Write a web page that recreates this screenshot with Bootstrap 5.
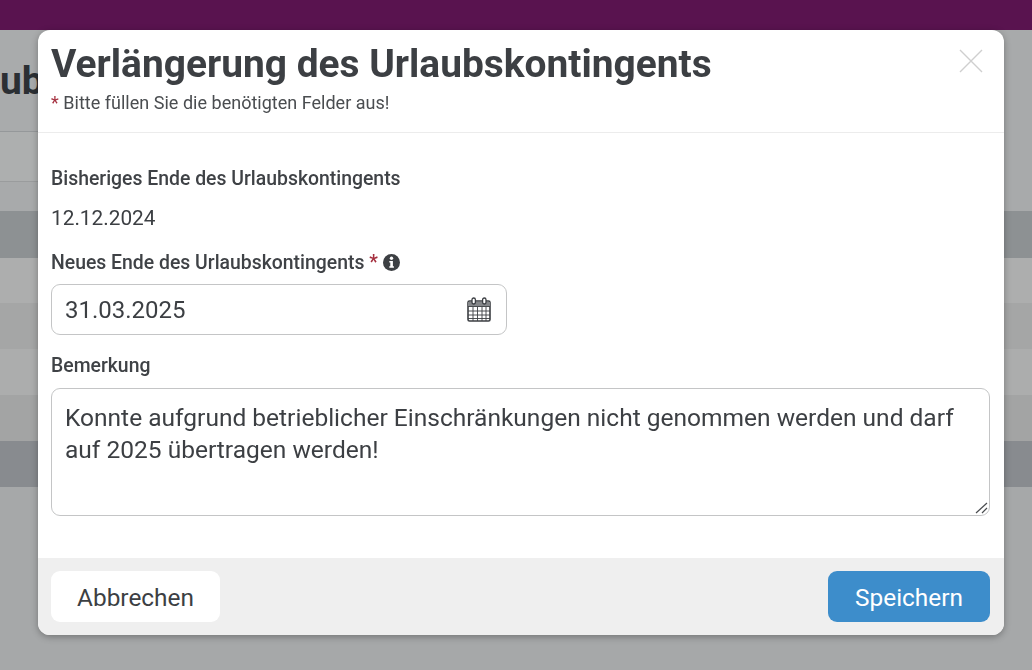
<!DOCTYPE html>
<html lang="de">
<head>
<meta charset="utf-8">
<title>Verlängerung des Urlaubskontingents</title>
<link href="https://cdn.jsdelivr.net/npm/bootstrap@5.3.0/dist/css/bootstrap.min.css" rel="stylesheet">
<style>
html,body{height:100%;overflow:hidden}
body{font-family:Roboto,"Liberation Sans",sans-serif;background:#a7a9aa;color:#3c3f43}
.topbar{height:30px;background:#59134f}
.under{position:relative;height:640px;background:#a8aaab}
.under-head{height:102px;width:50%;background:#a9abac;border-bottom:1px solid #95989a;padding-top:24px}
.under-title{font-size:39px;font-weight:700;line-height:54px;color:#2b2f34;margin:0}
.under-tabs{height:50px;width:50%;background:#adafaf;border-bottom:1px solid #9a9c9d}
.under-sp{height:29px}
.rw{height:46px;background:#a6a8a9}
.rw-a{height:47px;background:#8d9193}
.rw-b{height:45px;background:#adaeae}
.rw-c{background:#a5a6a6}
.rw-d{background:#acadad}
.rw-e{background:#a3a4a4}
.rw-f{background:#888b8f}
.rw-g{height:183px;background:#a6a8a9}
.dlg.modal-dialog{max-width:966px;width:966px;margin:30px 0 0 38px}
.dlg .modal-content{border:0;border-radius:12px;box-shadow:0 2px 7px rgba(0,0,0,.3);overflow:hidden;height:605px;color:#3c3f43}
.dlg .modal-header{display:block;position:relative;height:103px;padding:9px 13px 0;border-bottom:1px solid #ececec}
.dlg-title{font-size:38.900px;font-weight:700;line-height:50px;margin:0;color:#3c3f43}
.dlg-hint{font-size:18px;line-height:24px;margin:2px 0 0;color:#4a4d50;word-spacing:.1px}
.req{color:#a5303f}
.dlg-close{position:absolute;top:19px;right:21px;width:24px;height:24px;padding:0;border:0;background:none;line-height:0}
.dlg .modal-body{padding:33px 14px 0 13px;flex:0 0 auto;height:425px}
.lbl{display:block;font-size:19.400px;font-weight:500;line-height:26px;margin:0;color:#3f4246}
.val{font-size:20.800px;line-height:28px;margin:12px 0 18px;color:#3c3f43}
.dlg .form-control{font-size:24px;line-height:32px;color:#3c3f43;border:1px solid #c4c5c6;border-radius:9px;padding:9px 13px;box-shadow:none}
.date-wrap{position:relative;width:456px;margin:8px 0 18px}
.date-wrap .form-control{height:51px}
.cal{position:absolute;right:16px;top:13px}
.info{vertical-align:-2px}
.note-wrap{position:relative;margin-top:9px}
.dlg textarea.note{height:128px;resize:none;font-size:24.530px;padding:13px 30px 13px 13px}
.grip{position:absolute;right:2px;bottom:2px;pointer-events:none}
.dlg .modal-footer{display:flex;justify-content:space-between;height:77px;flex-wrap:nowrap;padding:13px 14px 13px 13px;margin:0;background:#efefef;border:0;border-radius:0}
.dlg .modal-footer>.btn{margin:0;height:51px;font-size:24.400px;line-height:32px;border-radius:9px;padding:10px 10px 8px;border:0}
.btn-back{width:169px;background:#fff;color:#3c3f43}
.btn-save{width:162px;background:#3d8dcb;color:#fff}
</style>
</head>
<body>
<div class="topbar"></div>
<div class="under">
  <div class="under-head"><h1 class="under-title">ub</h1></div>
  <div class="under-tabs"></div>
  <div class="under-sp"></div>
  <div class="rw-a"></div>
  <div class="rw-b"></div>
  <div class="rw rw-c"></div>
  <div class="rw rw-d"></div>
  <div class="rw rw-e"></div>
  <div class="rw rw-f"></div>
  <div class="rw-g"></div>
</div>
<div class="modal d-block" role="dialog">
  <div class="modal-dialog dlg">
    <div class="modal-content">
      <div class="modal-header">
        <h2 class="dlg-title">Verlängerung des Urlaubskontingents</h2>
        <p class="dlg-hint"><span class="req">*</span> Bitte füllen Sie die benötigten Felder aus!</p>
        <button type="button" class="dlg-close" aria-label="Schließen">
          <svg width="24" height="24" viewBox="0 0 24 24"><path d="M1 1L23 23M23 1L1 23" stroke="#cfcfcf" stroke-width="1.4" fill="none"/></svg>
        </button>
      </div>
      <div class="modal-body">
        <span class="lbl">Bisheriges Ende des Urlaubskontingents</span>
        <p class="val">12.12.2024</p>
        <label class="lbl" for="d1">Neues Ende des Urlaubskontingents <span class="req">*</span>
          <svg class="info" width="17" height="17" viewBox="0 0 17 17"><circle cx="8.5" cy="8.5" r="8.5" fill="#3c3f43"/><circle cx="8.5" cy="4.3" r="1.7" fill="#fff"/><path d="M6.300 7h3.600v5.200h1v1.600H6.300v-1.600h1V8.600h-1z" fill="#fff"/></svg>
        </label>
        <div class="date-wrap">
          <input id="d1" type="text" class="form-control" value="31.03.2025">
          <svg class="cal" width="24" height="25" viewBox="0 0 24 25" fill="none" stroke="#3c3f43"><rect x="1" y="4" width="22" height="20" rx="1.500" stroke-width="1.600"/><path d="M1 5h22v4.500H1z" fill="#85878a" stroke="none"/><path d="M1 9.500h22M1 14h22M1 18h22M1 21.500h22M6 10v14M10.500 10v14M15 10v14M19 10v14" stroke-width=".9"/><rect x="5" y="1" width="3.400" height="6" rx="1.700" fill="#fff" stroke-width="1.300"/><rect x="15.600" y="1" width="3.400" height="6" rx="1.700" fill="#fff" stroke-width="1.300"/></svg>
        </div>
        <label class="lbl" for="n1">Bemerkung</label>
        <div class="note-wrap">
          <textarea id="n1" class="form-control note">Konnte aufgrund betrieblicher Einschränkungen nicht genommen werden und darf auf 2025 übertragen werden!</textarea>
          <svg class="grip" width="13" height="12" viewBox="0 0 13 12" aria-hidden="true"><path d="M1 11L12 1M7 11L12 6" stroke="#4a4d50" stroke-width="1.200" fill="none"/></svg>
        </div>
      </div>
      <div class="modal-footer">
        <button type="button" class="btn btn-back">Abbrechen</button>
        <button type="button" class="btn btn-save">Speichern</button>
      </div>
    </div>
  </div>
</div>
<script src="https://cdn.jsdelivr.net/npm/bootstrap@5.3.0/dist/js/bootstrap.bundle.min.js"></script>
</body>
</html>
